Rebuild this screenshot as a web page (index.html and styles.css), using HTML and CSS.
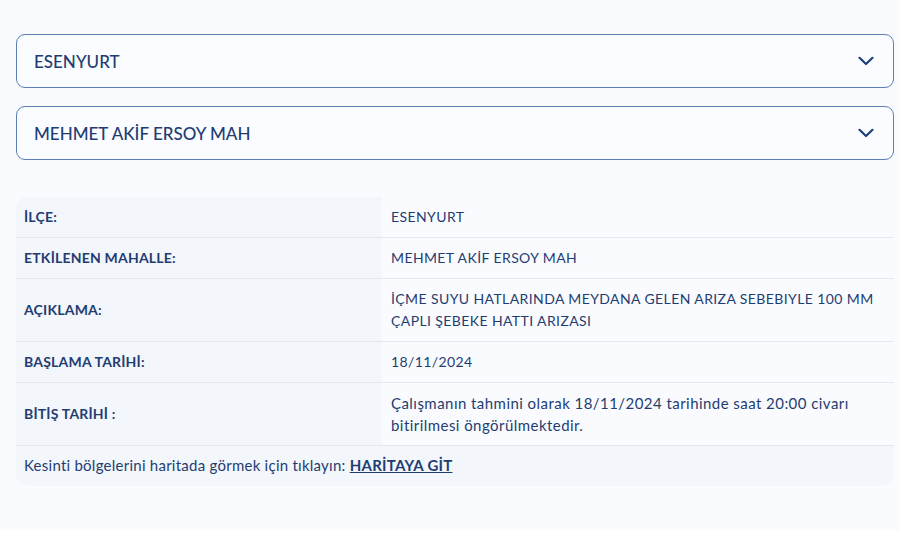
FILE: index.html
```html
<!DOCTYPE html>
<html lang="tr">
<head>
<meta charset="utf-8">
<link rel="stylesheet" href="styles.css">
</head>
<body>
<div class="page">
  <div class="select">
    <span class="select-text">ESENYURT</span>
    <svg class="chev" width="16" height="10" viewBox="0 0 16 10"><path d="M1.5 1.8 L8 8 L14.5 1.8" fill="none" stroke="#1d3f78" stroke-width="2.2" stroke-linecap="round" stroke-linejoin="round"/></svg>
  </div>
  <div class="select">
    <span class="select-text">MEHMET AKİF ERSOY MAH</span>
    <svg class="chev" width="16" height="10" viewBox="0 0 16 10"><path d="M1.5 1.8 L8 8 L14.5 1.8" fill="none" stroke="#1d3f78" stroke-width="2.2" stroke-linecap="round" stroke-linejoin="round"/></svg>
  </div>
  <div class="info">
    <div class="row">
      <div class="label">İLÇE:</div>
      <div class="value">ESENYURT</div>
    </div>
    <div class="row">
      <div class="label">ETKİLENEN MAHALLE:</div>
      <div class="value">MEHMET AKİF ERSOY MAH</div>
    </div>
    <div class="row">
      <div class="label">AÇIKLAMA:</div>
      <div class="value">İÇME SUYU HATLARINDA MEYDANA GELEN ARIZA SEBEBIYLE 100 MM ÇAPLI ŞEBEKE HATTI ARIZASI</div>
    </div>
    <div class="row">
      <div class="label">BAŞLAMA TARİHİ:</div>
      <div class="value">18/11/2024</div>
    </div>
    <div class="row">
      <div class="label">BİTİŞ TARİHİ :</div>
      <div class="value value-text">Çalışmanın tahmini olarak 18/11/2024 tarihinde saat 20:00 civarı bitirilmesi öngörülmektedir.</div>
    </div>
    <div class="foot">Kesinti bölgelerini haritada görmek için tıklayın: <a class="maplink" href="#">HARİTAYA GİT</a></div>
  </div>
</div>
</body>
</html>
```

FILE: styles.css
```css
html, body {
  margin: 0;
  padding: 0;
  background: #ffffff;
}
body {
  font-family: "Lato", "Noto Sans", sans-serif;
  color: #1f3d72;
}
.page {
  background: #f9fbfe;
  padding: 34px 6px 44px 16px;
  display: flex;
  flex-direction: column;
  gap: 18px;
}
.select {
  height: 52px;
  border: 1px solid #5d7fb8;
  border-radius: 9px;
  display: flex;
  align-items: center;
  justify-content: space-between;
  padding: 0 19px 0 17px;
  background: #fafcff;
}
.select-text {
  font-size: 17px;
  font-weight: 500;
  color: #1f3d72;
}
.chev {
  display: block;
}
.info {
  margin-top: 19px;
  border-radius: 12px;
  overflow: hidden;
  background: #f3f6fb;
}
.row {
  display: grid;
  grid-template-columns: 366px 1fr;
  border-bottom: 1px solid #e4e8ee;
}
.label {
  background: #f3f6fb;
  padding: 9px 8px;
  font-size: 14px;
  font-weight: 700;
  line-height: 22px;
  letter-spacing: 0.2px;
  display: flex;
  align-items: center;
  color: #1f3d72;
}
.value {
  background: #f9fbfe;
  padding: 9px 10px 9px 9px;
  font-size: 14px;
  line-height: 22px;
  letter-spacing: 0.4px;
  color: #1f3d72;
}
.value-text {
  font-size: 15px;
  letter-spacing: 0.45px;
}
.foot {
  padding: 9px 8px 10px;
  font-size: 15px;
  line-height: 21px;
  letter-spacing: 0.25px;
}
.maplink {
  color: #1f3d72;
  font-weight: 700;
  text-decoration: underline;
}
```
